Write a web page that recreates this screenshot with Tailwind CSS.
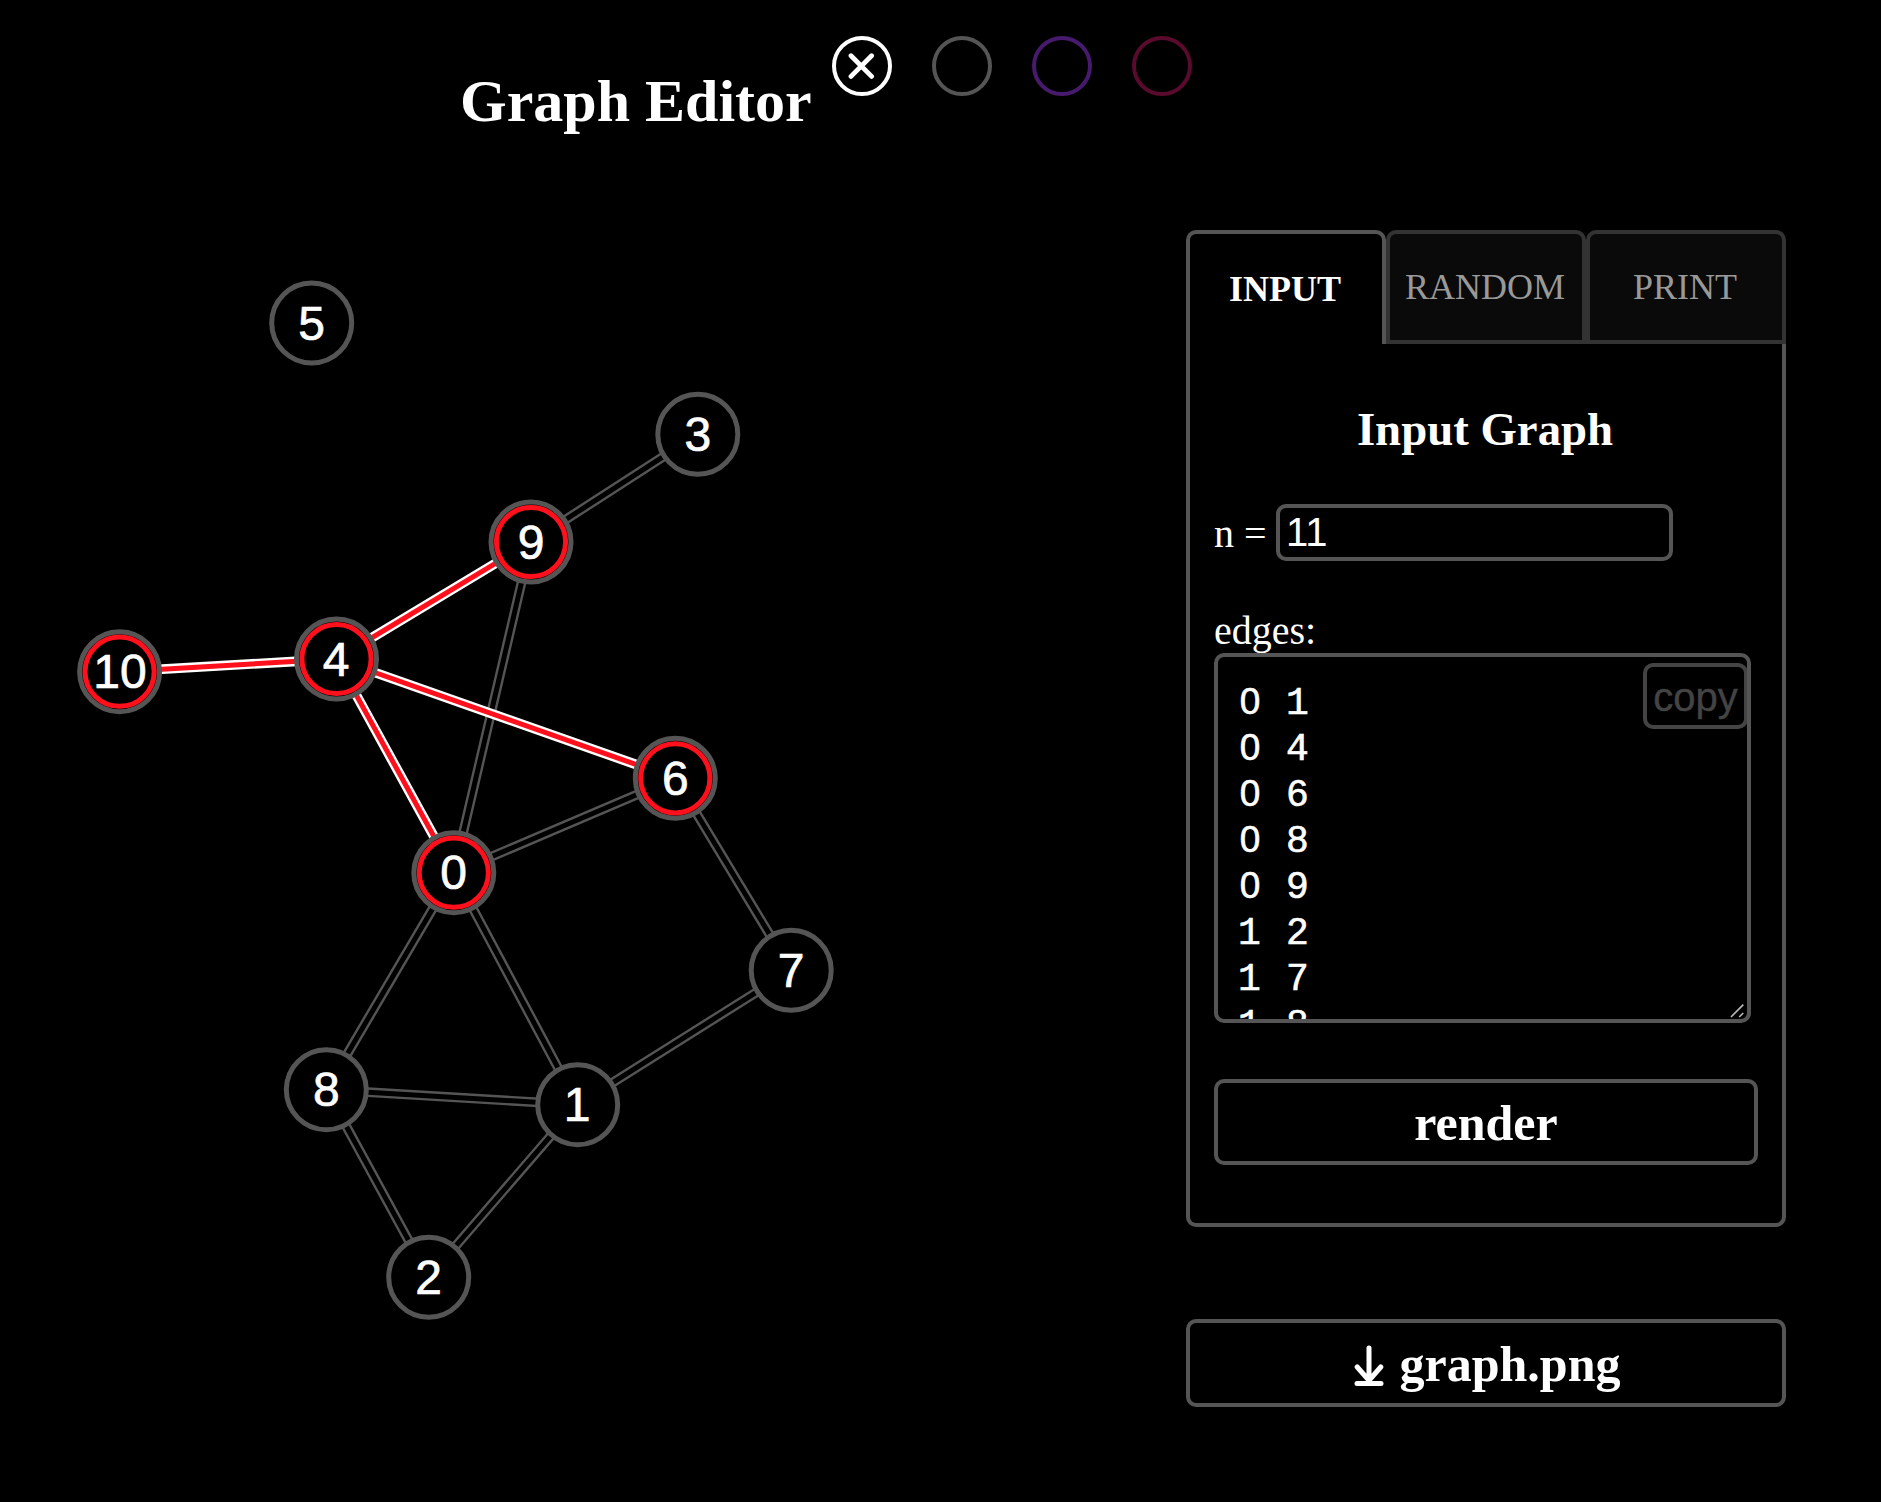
<!DOCTYPE html>
<html lang="en">
<head>
<meta charset="utf-8">
<title>Graph Editor</title>
<script src="https://cdn.jsdelivr.net/npm/@tailwindcss/browser@4"></script>
</head>
<body class="bg-black text-white w-[1881px] h-[1502px] overflow-hidden font-['Liberation_Serif',serif]">
<header class="flex items-start h-[200px] pl-[460px] pt-9">
  <h1 class="w-[372px] pt-[35px] text-[60px] leading-[60px] font-bold whitespace-nowrap">Graph Editor</h1>
  <div class="flex gap-10">
    <button class="flex items-center justify-center size-[60px] rounded-full border-4 border-white">
      <svg class="size-[28px]" viewBox="0 0 28 28" fill="none" stroke="#fff" stroke-width="4.8" stroke-linecap="round"><path d="M3 3.8 23.6 24.4M23.6 3.8 3 24.4"/></svg>
    </button>
    <button class="size-[60px] rounded-full border-4 border-[#555]"></button>
    <button class="size-[60px] rounded-full border-4 border-[#471a6e]"></button>
    <button class="size-[60px] rounded-full border-4 border-[#5a0a2c]"></button>
  </div>
</header>
<main class="flex items-start">
  <svg class="w-[1186px] h-[1302px] shrink-0" viewBox="0 200 1186 1302">
    <g stroke="#555" stroke-width="9.8">
      <path d="M697.8 434.3 531 542M531 542 453.8 872.7M453.8 872.7 675.3 778.3M675.3 778.3 791.2 970.3M791.2 970.3 577.7 1104.7M453.8 872.7 577.7 1104.7M453.8 872.7 326.3 1089.7M326.3 1089.7 577.7 1104.7M326.3 1089.7 428.7 1277.3M577.7 1104.7 428.7 1277.3"/>
      <path stroke="#000" stroke-width="5" d="M697.8 434.3 531 542M531 542 453.8 872.7M453.8 872.7 675.3 778.3M675.3 778.3 791.2 970.3M791.2 970.3 577.7 1104.7M453.8 872.7 577.7 1104.7M453.8 872.7 326.3 1089.7M326.3 1089.7 577.7 1104.7M326.3 1089.7 428.7 1277.3M577.7 1104.7 428.7 1277.3"/>
    </g>
    <g stroke="#fff" stroke-width="9.8">
      <path d="M336.5 659 119.6 671.7M336.5 659 531 542M336.5 659 675.3 778.3M336.5 659 453.8 872.7"/>
      <path stroke="#ff101c" stroke-width="5" d="M336.5 659 119.6 671.7M336.5 659 531 542M336.5 659 675.3 778.3M336.5 659 453.8 872.7"/>
    </g>
    <g fill="#000" stroke="#555" stroke-width="5">
      <circle cx="311.7" cy="323" r="40"/><circle cx="697.8" cy="434.3" r="40"/><circle cx="531" cy="542" r="40"/>
      <circle cx="336.5" cy="659" r="40"/><circle cx="119.6" cy="671.7" r="40"/><circle cx="675.3" cy="778.3" r="40"/>
      <circle cx="453.8" cy="872.7" r="40"/><circle cx="791.2" cy="970.3" r="40"/><circle cx="577.7" cy="1104.7" r="40"/>
      <circle cx="326.3" cy="1089.7" r="40"/><circle cx="428.7" cy="1277.3" r="40"/>
    </g>
    <g fill="none" stroke="#ff101c" stroke-width="5">
      <circle cx="531" cy="542" r="34.6"/><circle cx="336.5" cy="659" r="34.6"/><circle cx="119.6" cy="671.7" r="34.6"/>
      <circle cx="675.3" cy="778.3" r="34.6"/><circle cx="453.8" cy="872.7" r="34.6"/>
    </g>
    <g class="font-['Liberation_Sans',sans-serif] text-[48px]" fill="#fff" stroke="#fff" stroke-width=".7" text-anchor="middle">
      <text x="311.7" y="339.5">5</text><text x="697.8" y="450.8">3</text><text x="531" y="558.5">9</text>
      <text x="336" y="675.5">4</text><text x="119.9" y="688">10</text><text x="675.3" y="794.8">6</text>
      <text x="453.5" y="889">0</text><text x="791.2" y="986.7">7</text><text x="577" y="1121">1</text>
      <text x="326.3" y="1106">8</text><text x="428.7" y="1293.5">2</text>
    </g>
  </svg>
  <aside class="w-[600px] pt-[30px]">
    <nav class="flex h-[114px] text-4xl">
      <button class="flex-1 flex items-center justify-center border-4 border-b-0 border-[#555] rounded-t-[10px] pr-[2px] font-bold">INPUT</button>
      <button class="flex-1 flex items-center justify-center border-4 border-[#333] rounded-t-[10px] pr-[2px] bg-[#0a0a0a] text-[#999]">RANDOM</button>
      <button class="flex-1 flex items-center justify-center border-4 border-[#333] rounded-t-[10px] pr-[2px] bg-[#0a0a0a] text-[#999]">PRINT</button>
    </nav>
    <section class="h-[883px] border-4 border-t-0 border-[#555] rounded-b-[10px] px-6 pt-[62px] text-[40px] leading-[46px]">
      <h2 class="h-[98px] pr-[2px] text-[46.8px] leading-[46px] text-center font-bold">Input Graph</h2>
      <div class="flex items-center h-[57px]">
        <label class="w-[62px] pt-[2px] whitespace-pre">n = </label>
        <div class="w-[397px] h-[57px] border-4 border-[#555] rounded-[10px] pl-[6px] leading-[49px] font-['Liberation_Sans',sans-serif]">11</div>
      </div>
      <p class="pt-[47px] h-[92px]">edges:</p>
      <div class="relative w-[537px] h-[370px] border-4 border-[#555] rounded-[10px] overflow-hidden pl-5 pt-6 text-[38px] tracking-[1.2px] [-webkit-text-stroke:0.6px_#fff] font-['Liberation_Mono',monospace]">
        <div class="whitespace-pre"><span class="inline-block w-6 text-center tracking-normal text-[37px] leading-[40px] font-['Liberation_Sans',sans-serif]">0</span> 1</div>
        <div class="whitespace-pre"><span class="inline-block w-6 text-center tracking-normal text-[37px] leading-[40px] font-['Liberation_Sans',sans-serif]">0</span> 4</div>
        <div class="whitespace-pre"><span class="inline-block w-6 text-center tracking-normal text-[37px] leading-[40px] font-['Liberation_Sans',sans-serif]">0</span> 6</div>
        <div class="whitespace-pre"><span class="inline-block w-6 text-center tracking-normal text-[37px] leading-[40px] font-['Liberation_Sans',sans-serif]">0</span> 8</div>
        <div class="whitespace-pre"><span class="inline-block w-6 text-center tracking-normal text-[37px] leading-[40px] font-['Liberation_Sans',sans-serif]">0</span> 9</div>
        <div class="whitespace-pre">1 2</div>
        <div class="whitespace-pre">1 7</div>
        <div class="whitespace-pre">1 8</div>
        <button class="absolute top-[6px] right-[-1px] w-[105px] h-[66px] flex items-center justify-center pt-px border-4 border-[#444] rounded-[10px] text-[40px] tracking-normal text-[#444] [-webkit-text-stroke:0.4px_#444] font-['Liberation_Sans',sans-serif]">copy</button>
        <svg class="absolute right-[2px] bottom-[1px] size-4" viewBox="0 0 16 16" fill="none" stroke="#bbb" stroke-width="1.6"><path d="M2 15 14.3 2.6M10.2 15 14.3 11"/></svg>
      </div>
      <button class="flex items-center justify-center w-[544px] h-[86px] pt-px mt-14 border-4 border-[#555] rounded-[10px] text-[50px] font-bold">render</button>
    </section>
    <button class="flex items-center justify-center gap-4 w-full h-[88px] mt-[92px] pl-[2px] border-4 border-[#555] rounded-[10px] text-[50px] font-bold">
      <svg class="w-[30px] h-[42px] mt-[5px]" viewBox="0 0 30 42" fill="none" stroke="#fff" stroke-width="5" stroke-linecap="round"><path d="M15 3V35M3.2 22 15 35.5 26.8 22M3 38.4H27"/></svg>
      <span class="pt-[3px]">graph.png</span>
    </button>
  </aside>
</main>
</body>
</html>
